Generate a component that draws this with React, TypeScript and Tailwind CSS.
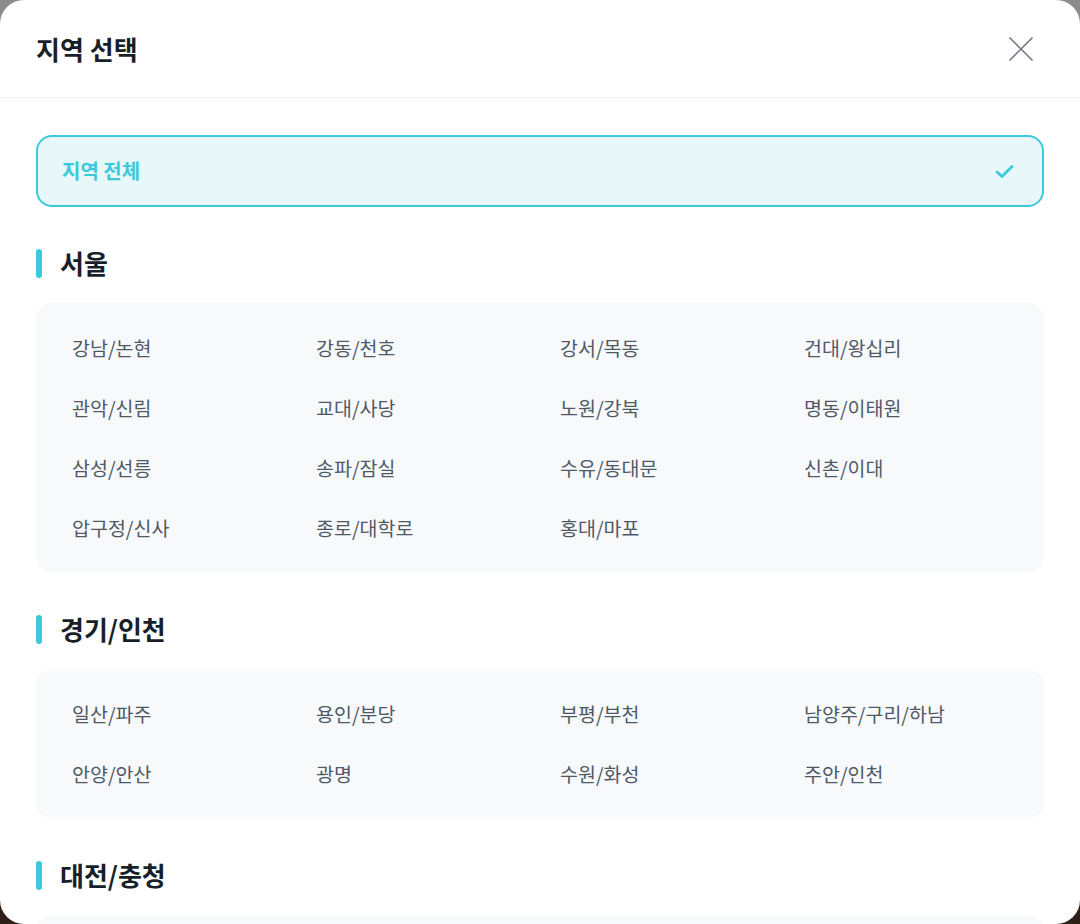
import { useState } from "react";

type Region = { name: string; areas: string[] };

const REGIONS: Region[] = [
  {
    name: "서울",
    areas: [
      "강남/논현",
      "강동/천호",
      "강서/목동",
      "건대/왕십리",
      "관악/신림",
      "교대/사당",
      "노원/강북",
      "명동/이태원",
      "삼성/선릉",
      "송파/잠실",
      "수유/동대문",
      "신촌/이대",
      "압구정/신사",
      "종로/대학로",
      "홍대/마포",
    ],
  },
  {
    name: "경기/인천",
    areas: [
      "일산/파주",
      "용인/분당",
      "부평/부천",
      "남양주/구리/하남",
      "안양/안산",
      "광명",
      "수원/화성",
      "주안/인천",
    ],
  },
  {
    name: "대전/충청",
    areas: ["대전", "천안/아산", "청주", "세종"],
  },
];

function CloseIcon() {
  return (
    <svg width="26" height="26" viewBox="0 0 26 26" fill="none" stroke="#6b7280" strokeWidth="1.5">
      <path d="M1.5 1.5 24.5 24.5M24.5 1.5 1.5 24.5" />
    </svg>
  );
}

function CheckIcon() {
  return (
    <svg width="19" height="15" viewBox="0 0 19 15" fill="none" stroke="#3bc9db" strokeWidth="2.8" strokeLinecap="round" strokeLinejoin="round">
      <path d="M2 8l5 4.5L17 2.5" />
    </svg>
  );
}

export default function App() {
  const [selected, setSelected] = useState<string | null>(null);

  return (
    <div
      className="h-screen w-full bg-gradient-to-b from-[#8d8d8d] via-[#6a6a6a] to-[#2e2016]"
      style={{ fontFamily: '"Noto Sans CJK KR", "Noto Sans", sans-serif' }}
    >
      <div className="flex h-[924px] w-full flex-col overflow-hidden rounded-3xl bg-white">
        {/* header */}
        <header className="flex h-[98px] shrink-0 items-center justify-between border-b border-[#f2f3f5] pl-9 pr-[46px]">
          <h1 className="text-[26px] font-bold leading-8 text-[#191f28]">지역 선택</h1>
          <button type="button" aria-label="닫기">
            <CloseIcon />
          </button>
        </header>

        {/* body */}
        <div className="flex-1 overflow-y-auto px-9 pt-[37px] pb-10">
          <button
            type="button"
            onClick={() => setSelected(null)}
            className="flex h-[72px] w-full items-center justify-between rounded-2xl border-2 border-[#3bc9db] bg-[#e8f8fa] pl-6 pr-7"
          >
            <span className="text-[20px] font-bold leading-7 text-[#3bc9db]">지역 전체</span>
            <CheckIcon />
          </button>

          {REGIONS.map((region) => (
            <section key={region.name} className="mt-10">
              <div className="mb-6 flex h-8 items-center gap-[18px]">
                <span className="h-[29px] w-[6px] rounded-full bg-[#3bc9db]" />
                <h2 className="text-[26px] font-bold leading-8 text-[#191f28]">{region.name}</h2>
              </div>
              <div className="grid grid-cols-4 gap-x-4 gap-y-3 rounded-2xl bg-[#f8f9fb] px-6 py-[21px]">
                {region.areas.map((area) => (
                  <button
                    key={area}
                    type="button"
                    onClick={() => setSelected(area)}
                    className={
                      selected === area
                        ? "flex h-12 items-center px-3 text-left text-[19.5px] font-bold text-[#3bc9db]"
                        : "flex h-12 items-center px-3 text-left text-[19.5px] text-[#4e5968]"
                    }
                  >
                    {area}
                  </button>
                ))}
              </div>
            </section>
          ))}
        </div>
      </div>
    </div>
  );
}
